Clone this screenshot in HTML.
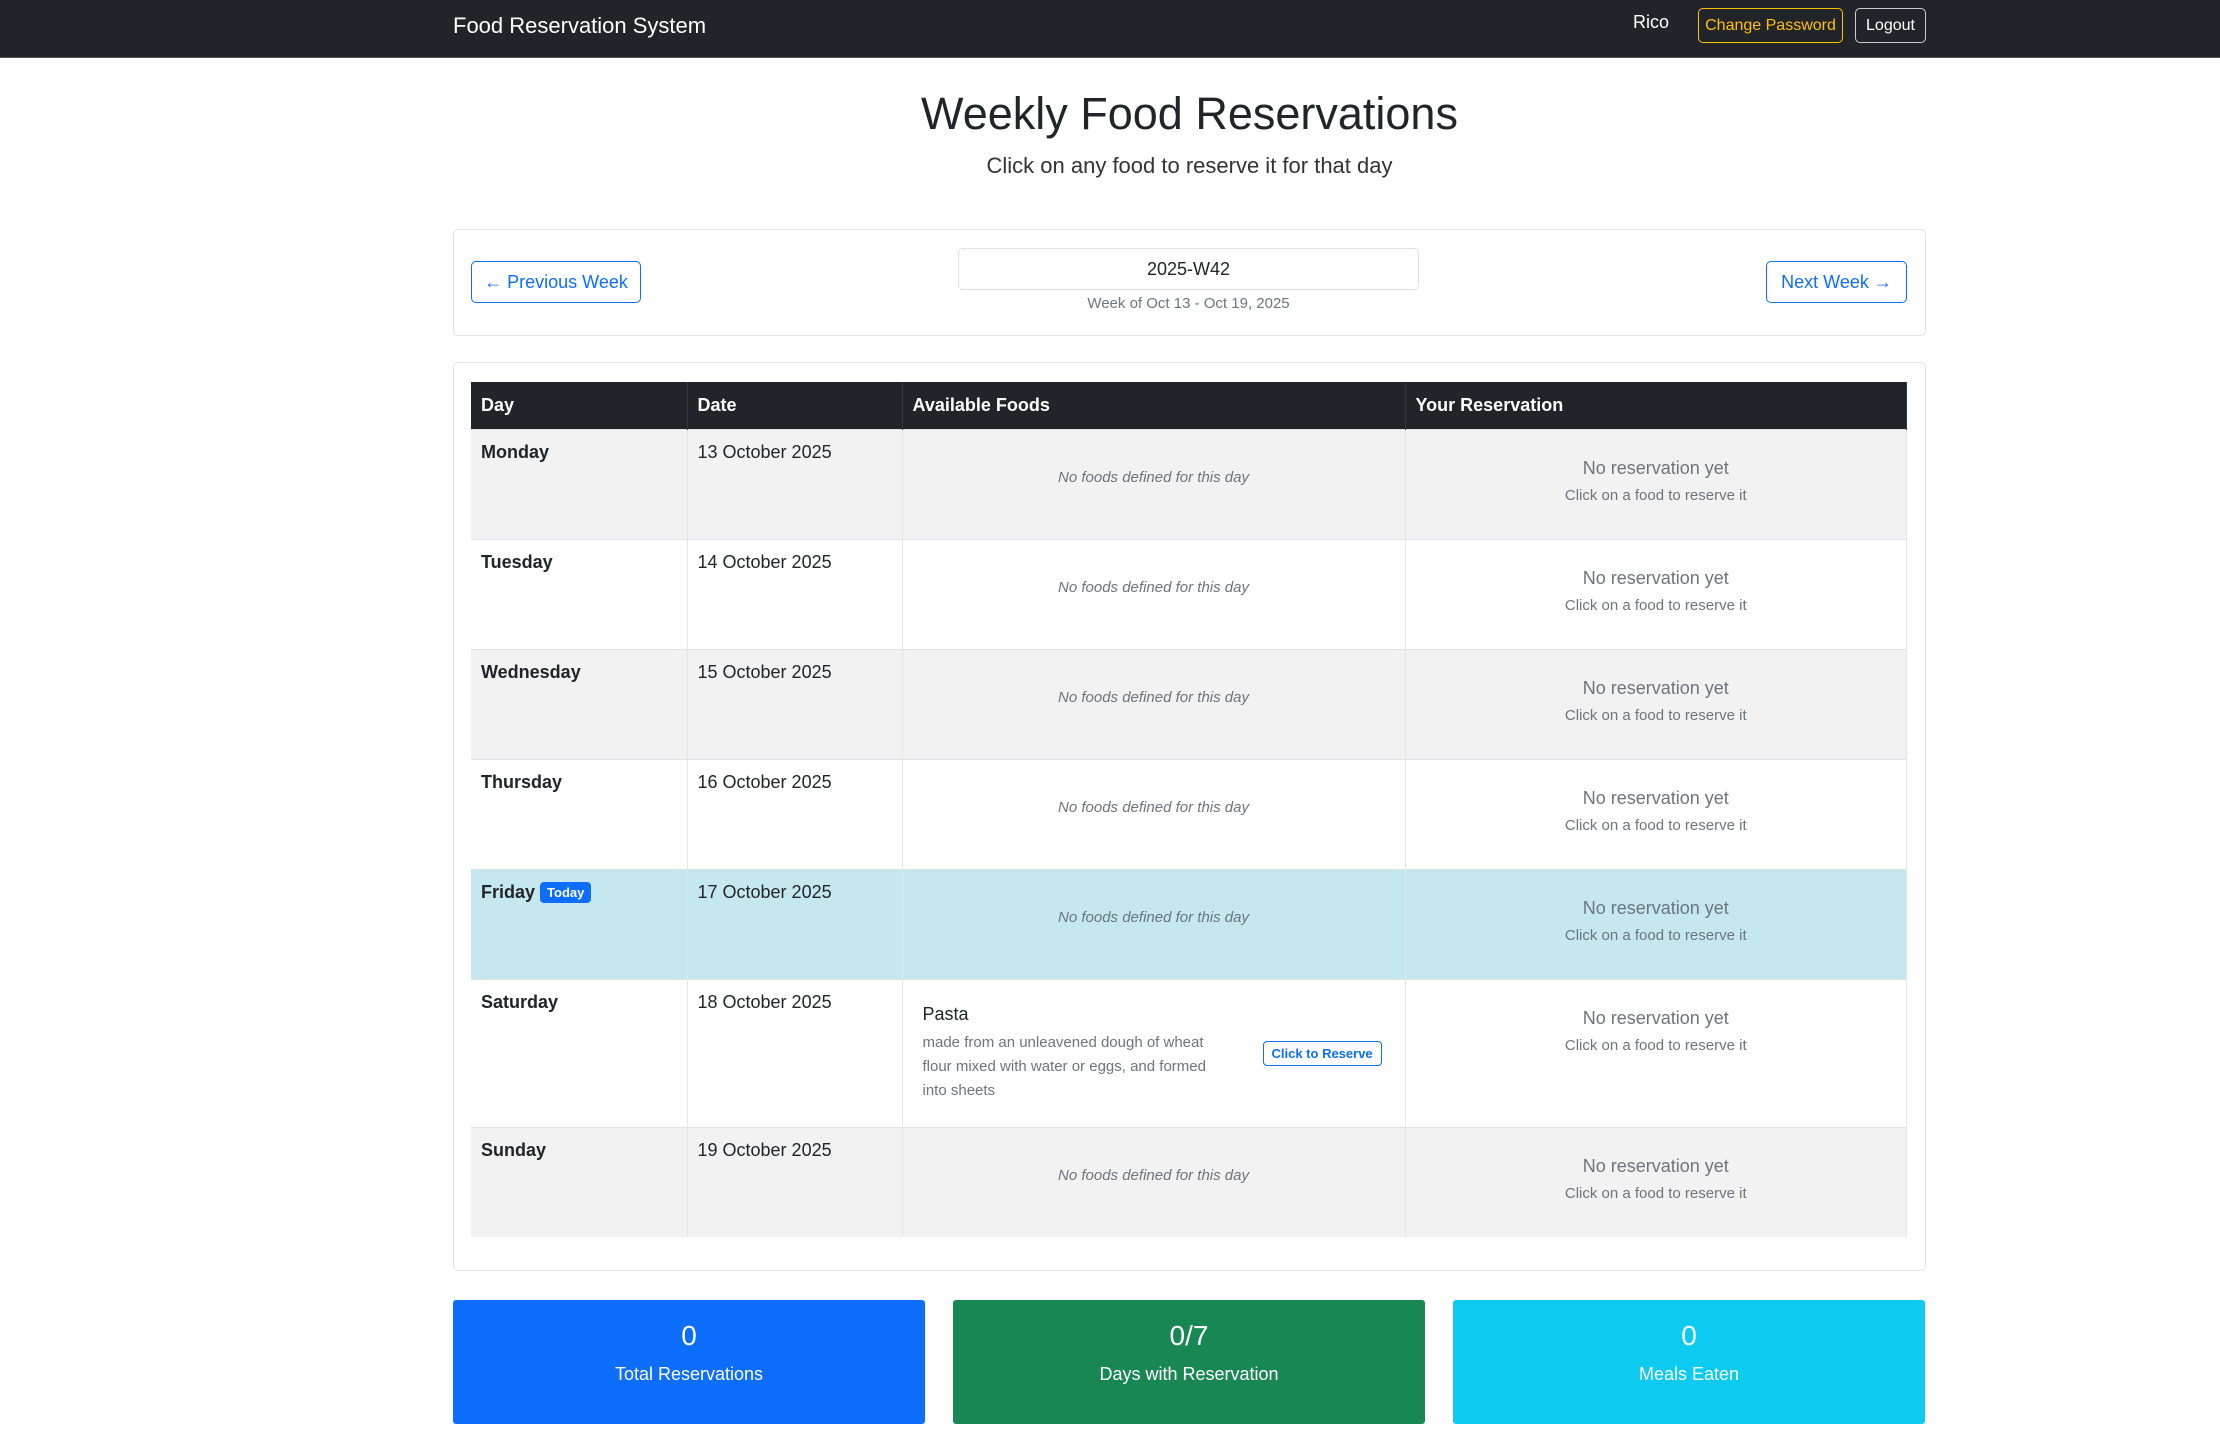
<!DOCTYPE html>
<html><head><meta charset="utf-8"><style>
*{box-sizing:border-box;margin:0;padding:0}
body{width:2220px;height:1446px;background:#fff;font-family:"Liberation Sans",sans-serif;color:#212529;position:relative;overflow:hidden}
.nav{position:absolute;left:0;top:0;width:2220px;height:58px;background:#212529;border-bottom:1px solid #555}
.abs{position:absolute}
.btn{position:absolute;border:1px solid;border-radius:5px;display:flex;align-items:center;justify-content:center;font-size:16px}
table{position:absolute;left:471px;top:382px;width:1436px;border-collapse:collapse;font-size:18px}
th{background:#212529;color:#fff;text-align:left;height:47px;padding:0 10px;font-size:18px;border-right:1px solid #32383e}
td{border-top:1px solid #dee2e6;border-right:1px solid #e5e5e5;padding:12px 10px;vertical-align:top;height:110px}
tr.g td{background:#f2f2f2}
tr.t td{background:#c5e8ee}
td.c{text-align:center;padding-top:36px}
td.r{text-align:center;padding-top:28px}
.nf{font-style:italic;color:#6c757d;font-size:15px}
.nr{color:#6c757d;font-size:18px}
.ns{color:#6c757d;font-size:15px;margin-top:8px}
.card{position:absolute;border:1px solid #e3e3e3;border-radius:5px}
.stat{position:absolute;top:1300px;height:124px;width:472px;color:#fff;text-align:center;border-radius:3px}
.stat b{display:block;font-weight:normal;font-size:28px;margin-top:20px}
.stat span{display:block;font-size:18px;margin-top:12px}
</style></head><body>
<div class="nav"></div>
<div class="abs" style="left:453px;top:13px;color:#fff;font-size:22px">Food Reservation System</div>
<div class="abs" style="left:1633px;top:12px;color:#fff;font-size:18px">Rico</div>
<div class="btn" style="left:1698px;top:8px;width:145px;height:35px;border-color:#ffc107;color:#ffc107">Change Password</div>
<div class="btn" style="left:1855px;top:8px;width:71px;height:35px;border-color:#ccc;color:#fff">Logout</div>
<div class="abs" style="left:453px;width:1473px;top:88px;text-align:center;font-size:45px">Weekly Food Reservations</div>
<div class="abs" style="left:453px;width:1473px;top:153px;text-align:center;font-size:22px;color:#333">Click on any food to reserve it for that day</div>
<div class="card" style="left:453px;top:229px;width:1473px;height:107px"></div>
<div class="btn" style="left:471px;top:261px;width:170px;height:42px;border-color:#0d6efd;color:#0d6efd;font-size:18px">← Previous Week</div>
<div class="btn" style="left:958px;top:248px;width:461px;height:42px;border-color:#dee2e6;color:#212529;font-size:18px">2025-W42</div>
<div class="abs" style="left:958px;width:461px;top:295px;text-align:center;font-size:15px;color:#6c757d">Week of Oct 13 - Oct 19, 2025</div>
<div class="btn" style="left:1766px;top:261px;width:141px;height:42px;border-color:#0d6efd;color:#0d6efd;font-size:18px">Next Week →</div>
<div class="card" style="left:453px;top:362px;width:1473px;height:909px"></div>
<table>
<tr><th style="width:216px">Day</th><th style="width:215px">Date</th><th style="width:503px">Available Foods</th><th>Your Reservation</th></tr>
<tr class="g"><td><b>Monday</b></td><td>13 October 2025</td><td class="c"><span class="nf">No foods defined for this day</span></td><td class="r"><div class="nr">No reservation yet</div><div class="ns">Click on a food to reserve it</div></td></tr>
<tr><td><b>Tuesday</b></td><td>14 October 2025</td><td class="c"><span class="nf">No foods defined for this day</span></td><td class="r"><div class="nr">No reservation yet</div><div class="ns">Click on a food to reserve it</div></td></tr>
<tr class="g"><td><b>Wednesday</b></td><td>15 October 2025</td><td class="c"><span class="nf">No foods defined for this day</span></td><td class="r"><div class="nr">No reservation yet</div><div class="ns">Click on a food to reserve it</div></td></tr>
<tr><td><b>Thursday</b></td><td>16 October 2025</td><td class="c"><span class="nf">No foods defined for this day</span></td><td class="r"><div class="nr">No reservation yet</div><div class="ns">Click on a food to reserve it</div></td></tr>
<tr class="t"><td><b>Friday</b> <span style="background:#0d6efd;color:#fff;font-size:13px;font-weight:bold;padding:3px 7px;border-radius:4px;position:relative;top:-1px">Today</span></td><td>17 October 2025</td><td class="c"><span class="nf">No foods defined for this day</span></td><td class="r"><div class="nr">No reservation yet</div><div class="ns">Click on a food to reserve it</div></td></tr>
<tr><td style="height:148px"><b>Saturday</b></td><td>18 October 2025</td><td style="padding:14px 20px;vertical-align:middle"><div style="display:flex;align-items:center"><div style="width:310px"><div style="font-size:18px;margin-bottom:6px">Pasta</div><div style="font-size:15px;color:#6c757d;line-height:24px">made from an unleavened dough of wheat flour mixed with water or eggs, and formed into sheets</div></div><div style="margin-left:30px;border:1px solid #0d6efd;color:#0d6efd;border-radius:4px;font-size:13px;font-weight:bold;padding:4px 8px;white-space:nowrap">Click to Reserve</div></div></td><td class="r"><div class="nr">No reservation yet</div><div class="ns">Click on a food to reserve it</div></td></tr>
<tr class="g"><td><b>Sunday</b></td><td>19 October 2025</td><td class="c"><span class="nf">No foods defined for this day</span></td><td class="r"><div class="nr">No reservation yet</div><div class="ns">Click on a food to reserve it</div></td></tr>
</table>
<div class="stat" style="left:453px;background:#0d6efd"><b>0</b><span>Total Reservations</span></div>
<div class="stat" style="left:953px;background:#198754"><b>0/7</b><span>Days with Reservation</span></div>
<div class="stat" style="left:1453px;background:#0dcaf0"><b>0</b><span>Meals Eaten</span></div>
</body></html>
